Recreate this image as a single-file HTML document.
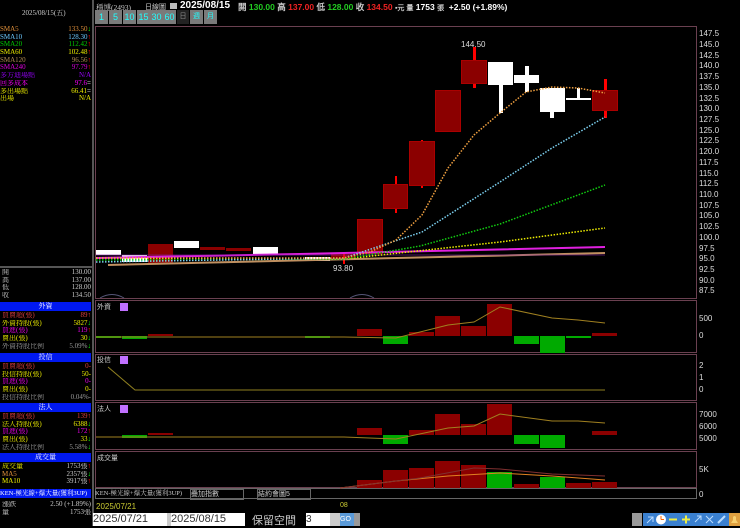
<!DOCTYPE html><html><head><meta charset="utf-8"><style>
body{margin:0;width:740px;height:526px;background:#000;overflow:hidden;font-family:"Liberation Sans","WenQuanYi Zen Hei",sans-serif;position:relative;color:#ccc}
.a{position:absolute;white-space:nowrap}
.l{font-family:"Liberation Serif","Noto Serif CJK SC",serif;font-size:7px;line-height:7.7px}
.l div{position:relative;height:7.7px;overflow:hidden}
.r{position:absolute;right:0;top:0}
.hd{position:absolute;left:0;width:91px;height:9px;background:#0018f0;color:#fff;font-size:7px;line-height:9px;text-align:center;font-family:"Liberation Serif","Noto Serif CJK SC",serif;overflow:hidden}
.btn{position:absolute;top:10px;height:14px;background:#7a7a7a;color:#2ff;font-size:9px;line-height:14px;text-align:center}
.ax{position:absolute;left:699px;font-size:8px;color:#ddd;font-family:"Liberation Sans",sans-serif}
</style></head><body>
<div class="a" style="left:92px;top:0;width:2px;height:526px;background:#555"></div>
<div class="a" style="left:22px;top:8px;color:#ccc;font-size:7px;font-family:'Liberation Serif','Noto Serif CJK SC',serif">2025/08/15(五)</div>
<div class="a l" style="left:0;top:26px;width:91px">
<div style="color:#e0903a">SMA5<span class="r">133.50<b style="color:#0f0">↓</b></span></div>
<div style="color:#6ac8ff">SMA10<span class="r">128.30<b style="color:#f00">↑</b></span></div>
<div style="color:#0c0">SMA20<span class="r">112.42<b style="color:#f00">↑</b></span></div>
<div style="color:#ee0">SMA60<span class="r">102.48<b style="color:#f00">↑</b></span></div>
<div style="color:#b08a50">SMA120<span class="r">96.56<b style="color:#f00">↑</b></span></div>
<div style="color:#d0d">SMA240<span class="r">97.79<b style="color:#f00">↑</b></span></div>
<div style="color:#90f">多方迪場點<span class="r">N/A</span></div>
<div style="color:#f0f">回多成本<span class="r">97.6<b style="color:#ccc">=</b></span></div>
<div style="color:#ee0">多出場點<span class="r">66.41<b style="color:#ccc">=</b></span></div>
<div style="color:#ee0">出場<span class="r">N/A</span></div></div>
<div class="a" style="left:0;top:266px;width:92px;height:2px;background:#555"></div>
<div class="a l" style="left:2px;top:269px;width:89px;color:#ccc">
<div>開<span class="r">130.00</span></div><div>高<span class="r">137.00</span></div><div>低<span class="r">128.00</span></div><div>收<span class="r">134.50</span></div></div>
<div class="hd" style="top:302px">外資</div>
<div class="a l" style="left:2px;top:312px;width:89px">
<div style="color:#e04040">買賣超(張)<span class="r">89<b>↑</b></span></div>
<div style="color:#ee0">外資持股(張)<span class="r">5827<b style="color:#0f0">↓</b></span></div>
<div style="color:#e0e">買進(張)<span class="r">119<b style="color:#f00">↑</b></span></div>
<div style="color:#ee0">賣出(張)<span class="r">30<b style="color:#0f0">↓</b></span></div>
<div style="color:#999">外資持股比例<span class="r">5.09%<b style="color:#0f0">↓</b></span></div></div>
<div class="hd" style="top:353px">投信</div>
<div class="a l" style="left:2px;top:363px;width:89px">
<div style="color:#e04040">買賣超(張)<span class="r">0-</span></div>
<div style="color:#ee0">投信持股(張)<span class="r">50-</span></div>
<div style="color:#e0e">買進(張)<span class="r">0-</span></div>
<div style="color:#ee0">賣出(張)<span class="r">0-</span></div>
<div style="color:#999">投信持股比例<span class="r">0.04%-</span></div></div>
<div class="hd" style="top:403px">法人</div>
<div class="a l" style="left:2px;top:413px;width:89px">
<div style="color:#e04040">買賣超(張)<span class="r">139<b>↑</b></span></div>
<div style="color:#ee0">法人持股(張)<span class="r">6388<b style="color:#0f0">↓</b></span></div>
<div style="color:#e0e">買進(張)<span class="r">172<b style="color:#f00">↑</b></span></div>
<div style="color:#ee0">賣出(張)<span class="r">33<b style="color:#0f0">↓</b></span></div>
<div style="color:#999">法人持股比例<span class="r">5.58%<b style="color:#0f0">↓</b></span></div></div>
<div class="hd" style="top:453px">成交量</div>
<div class="a l" style="left:2px;top:463px;width:89px">
<div style="color:#ee0">成交量<span class="r" style="color:#ccc">1753張<b style="color:#f00">↑</b></span></div>
<div style="color:#e0903a">MA5<span class="r" style="color:#ccc">2357張<b style="color:#0f0">↓</b></span></div>
<div style="color:#ee0">MA10<span class="r" style="color:#ccc">3917張<b style="color:#f00">↑</b></span></div></div>
<div class="hd" style="top:489px;text-align:left;font-size:6.5px">KEN-極光線+爆大量(獲利3UP)</div>
<div class="a l" style="left:2px;top:501px;width:89px">
<div>漲跌<span class="r">2.50 (+1.89%)</span></div><div>量<span class="r">1753張</span></div></div>
<!-- top bar -->
<div class="a" style="left:96px;top:2px;font-size:7.5px;color:#ccc;font-family:'Liberation Serif','Noto Serif CJK SC',serif">穩博(2493)</div>
<div class="a" style="left:145px;top:2px;font-size:7px;color:#ccc">日線圖</div>
<div class="a" style="left:170px;top:3px;width:7px;height:6px;background:#bbb"></div>
<div class="a" style="left:180px;top:0;font-size:10px;font-weight:bold;color:#fff">2025/08/15</div>
<div class="a" style="left:238px;top:1px;font-size:8.5px;font-weight:bold">閞 <span style="color:#2c2">130.00</span> 高 <span style="color:#e22">137.00</span> 低 <span style="color:#2c2">128.00</span> 收 <span style="color:#e22">134.50</span> <span style="color:#ccc;font-size:7px">▪元 量</span> <span style="color:#fff">1753</span> <span style="font-size:7px">張</span> &nbsp;<span style="color:#fff">+2.50 (+1.89%)</span></div>
<div class="btn" style="left:95px;width:13px">1</div><div class="btn" style="left:109px;width:13px">5</div><div class="btn" style="left:123px;width:13px">10</div><div class="btn" style="left:137px;width:13px">15</div><div class="btn" style="left:150px;width:13px">30</div><div class="btn" style="left:163px;width:13px">60</div><div class="btn" style="left:177px;width:12px;background:#222;color:#888;font-size:7px">日</div><div class="btn" style="left:190px;width:13px;font-size:7px">週</div><div class="btn" style="left:204px;width:13px;font-size:7px">月</div>
<div class="ax" style="top:29px">147.5</div><div class="ax" style="top:40px">145.0</div><div class="ax" style="top:51px">142.5</div><div class="ax" style="top:61px">140.0</div><div class="ax" style="top:72px">137.5</div><div class="ax" style="top:83px">135.0</div><div class="ax" style="top:94px">132.5</div><div class="ax" style="top:104px">130.0</div><div class="ax" style="top:115px">127.5</div><div class="ax" style="top:126px">125.0</div><div class="ax" style="top:136px">122.5</div><div class="ax" style="top:147px">120.0</div><div class="ax" style="top:158px">117.5</div><div class="ax" style="top:169px">115.0</div><div class="ax" style="top:179px">112.5</div><div class="ax" style="top:190px">110.0</div><div class="ax" style="top:201px">107.5</div><div class="ax" style="top:211px">105.0</div><div class="ax" style="top:222px">102.5</div><div class="ax" style="top:233px">100.0</div><div class="ax" style="top:244px">97.5</div><div class="ax" style="top:254px">95.0</div><div class="ax" style="top:265px">92.5</div><div class="ax" style="top:276px">90.0</div><div class="ax" style="top:286px">87.5</div>
<div class="ax" style="top:314px">500</div><div class="ax" style="top:331px">0</div>
<div class="ax" style="top:361px">2</div><div class="ax" style="top:373px">1</div><div class="ax" style="top:385px">0</div>
<div class="ax" style="top:410px">7000</div><div class="ax" style="top:422px">6000</div><div class="ax" style="top:434px">5000</div>
<div class="ax" style="top:465px">5K</div><div class="ax" style="top:490px">0</div>
<svg class="a" style="left:0;top:0" width="740" height="526">
<g fill="none" stroke="#6a4050" stroke-width="1">
<rect x="95.5" y="26.5" width="601" height="272"/>
<rect x="95.5" y="300.5" width="601" height="52"/>
<rect x="95.5" y="354.5" width="601" height="46"/>
<rect x="95.5" y="402.5" width="601" height="47"/>
<rect x="95.5" y="451.5" width="601" height="36"/>
</g>
<g fill="none" stroke="#666"><rect x="95.5" y="488.5" width="601" height="10"/></g>
<g fill="#fff"><rect x="96" y="250" width="25" height="5"/><rect x="122" y="255" width="25" height="7"/><rect x="174" y="241" width="25" height="7"/><rect x="253" y="247" width="25" height="7"/><rect x="305" y="257" width="25" height="4"/></g>
<g fill="#8b0000"><rect x="148" y="244" width="25" height="19"/><rect x="200" y="247" width="25" height="3"/><rect x="226" y="248" width="25" height="3"/><rect x="331" y="254" width="25" height="5"/></g>
<rect x="343" y="252" width="2" height="12" fill="#f00"/>
<g fill="#f00"><rect x="395" y="176" width="2" height="37"/><rect x="421" y="140" width="2" height="48"/><rect x="473" y="47" width="3" height="41"/><rect x="604" y="79" width="3" height="39"/></g>
<g fill="#8b0000" stroke="#a00"><rect x="357.5" y="219.5" width="25" height="34"/><rect x="383.5" y="184.5" width="24" height="24"/><rect x="409.5" y="141.5" width="25" height="44"/><rect x="435.5" y="90.5" width="25" height="41"/><rect x="461.5" y="60.5" width="25" height="23"/><rect x="592.5" y="90.5" width="25" height="20"/></g>
<g fill="#fff"><rect x="488" y="62" width="25" height="23"/><rect x="499" y="85" width="4" height="28"/><rect x="514" y="75" width="25" height="8"/><rect x="525" y="66" width="4" height="26"/><rect x="540" y="88" width="25" height="24"/><rect x="550" y="112" width="4" height="6"/><rect x="566" y="98" width="25" height="2"/><rect x="577" y="88" width="3" height="11"/></g>
<text x="461" y="47" fill="#ddd" font-size="8" font-family="Liberation Sans">144.50</text>
<text x="333" y="271" fill="#ddd" font-size="8" font-family="Liberation Sans">93.80</text>
<path d="M108 265 L605 253" stroke="#c09060" stroke-width="2" fill="none"/>
<path d="M96 258 L300 254 L605 247" stroke="#e020e0" stroke-width="2" fill="none"/>
<path d="M96 255 L605 255" stroke="#8020a0" stroke-width="1" fill="none" opacity=".6"/>
<g fill="none" stroke-width="1.5" stroke-dasharray="1.5 1.5">
<path d="M96 258 L344 259 L500 242 L605 228" stroke="#ee0"/>
<path d="M96 260 L344 259 L420 246 L500 224 L605 185" stroke="#1c1"/>
<path d="M96 262 L344 258 L422 232 L500 182 L552 148 L605 117" stroke="#7cd0f0"/>
<path d="M96 258 L344 258 L370 252 L396 240 L422 215 L448 168 L474 135 L500 113 L526 92 L552 87 L578 88 L605 93" stroke="#f0a040"/>
</g>
<path d="M100 298 Q112 291 124 298 M350 298 Q362 291 374 298" stroke="#557" fill="none"/>
<g fill="#8b0000"><rect x="148" y="334" width="25" height="2"/><rect x="357" y="329" width="25" height="7"/><rect x="409" y="332" width="25" height="4"/><rect x="435" y="316" width="25" height="20"/><rect x="461" y="326" width="25" height="10"/><rect x="487" y="304" width="25" height="32"/><rect x="592" y="333" width="25" height="3"/></g>
<g fill="#0a0"><rect x="122" y="336" width="25" height="3"/><rect x="383" y="336" width="25" height="8"/><rect x="514" y="336" width="25" height="8"/><rect x="540" y="336" width="25" height="17"/><rect x="566" y="336" width="25" height="2"/><rect x="96" y="336" width="25" height="2"/><rect x="305" y="336" width="25" height="2"/></g>
<path d="M96 337 L344 337 L396 338 L448 325 L474 322 L500 307 L552 318 L578 320 L605 323" stroke="#a08020" fill="none"/>
<text x="97" y="309" fill="#ccc" font-size="7">外資</text><rect x="120" y="303" width="8" height="8" fill="#c070ff"/>
<text x="97" y="362" fill="#ccc" font-size="7">投信</text><rect x="120" y="356" width="8" height="8" fill="#c070ff"/>
<path d="M108 367 L135 390 L605 390" stroke="#908020" fill="none"/>
<text x="97" y="411" fill="#ccc" font-size="7">法人</text><rect x="120" y="405" width="8" height="8" fill="#c070ff"/>
<g fill="#8b0000"><rect x="148" y="433" width="25" height="2"/><rect x="357" y="428" width="25" height="7"/><rect x="409" y="430" width="25" height="5"/><rect x="435" y="414" width="25" height="21"/><rect x="461" y="424" width="25" height="11"/><rect x="487" y="404" width="25" height="31"/><rect x="592" y="431" width="25" height="4"/></g>
<g fill="#0a0"><rect x="122" y="435" width="25" height="3"/><rect x="383" y="435" width="25" height="9"/><rect x="514" y="435" width="25" height="9"/><rect x="540" y="435" width="25" height="13"/></g>
<path d="M96 437 L344 437 L396 439 L448 428 L474 426 L500 414 L552 421 L578 421 L605 423" stroke="#a08020" fill="none"/>
<text x="97" y="460" fill="#ccc" font-size="7">成交量</text>
<g fill="#8b0000"><rect x="357" y="480" width="25" height="8"/><rect x="383" y="470" width="25" height="18"/><rect x="409" y="468" width="25" height="20"/><rect x="435" y="461" width="25" height="27"/><rect x="461" y="465" width="25" height="23"/><rect x="514" y="484" width="25" height="4"/><rect x="566" y="483" width="25" height="5"/><rect x="592" y="482" width="25" height="6"/></g>
<g fill="#0a0"><rect x="487" y="472" width="25" height="16"/><rect x="540" y="477" width="25" height="11"/></g>
<path d="M340 488 L396 481 L448 476 L500 473 L552 476 L605 480" stroke="#e08020" fill="none"/>
<path d="M340 488 L420 478 L474 468 L500 469 L552 474 L605 476" stroke="#803030" fill="none"/>
</svg>
<div class="a" style="left:95px;top:489px;width:92px;height:10px;color:#ccc;font-size:6.5px;line-height:10px;font-family:'Liberation Serif','Noto Serif CJK SC',serif;overflow:hidden">KEN-極光線+爆大量(獲利3UP)</div>
<div class="a" style="left:190px;top:489px;width:52px;height:9px;border:1px solid #666;color:#ccc;font-size:7px;line-height:9px">疊加指數</div>
<div class="a" style="left:257px;top:489px;width:52px;height:9px;border:1px solid #666;color:#ccc;font-size:7px;line-height:9px">結約會圖5</div>
<div class="a" style="left:96px;top:502px;color:#cc3;font-size:8px">2025/07/21</div>
<div class="a" style="left:340px;top:502px;color:#cc3;font-size:7px">08</div>
<div class="a" style="left:93px;top:513px;width:74px;height:13px;background:#fff;color:#333;font-size:11px;line-height:13px">2025/07/21</div>
<div class="a" style="left:167px;top:513px;width:5px;height:13px;background:#ccc"></div>
<div class="a" style="left:171px;top:513px;width:74px;height:13px;background:#fff;color:#333;font-size:11px;line-height:13px">2025/08/15</div>
<div class="a" style="left:252px;top:512px;color:#ccc;font-size:11px">保留空間</div>
<div class="a" style="left:306px;top:513px;width:24px;height:13px;background:#fff;color:#333;font-size:10px;line-height:13px">3</div>
<div class="a" style="left:330px;top:513px;width:10px;height:13px;background:#ccc"></div>
<div class="a" style="left:340px;top:513px;width:14px;height:13px;background:#5a9ad8;color:#fff;font-size:7px;line-height:13px">GO</div>
<div class="a" style="left:354px;top:513px;width:6px;height:13px;background:#999"></div>
<div class="a" style="left:632px;top:513px;width:10px;height:13px;background:#999"></div>
<svg class="a" style="left:643px;top:513px" width="97" height="13">
<rect x="0" width="97" height="13" fill="#3a80d0"/>
<path d="M4 10 L10 4 M5 4 H10 V9" stroke="#bdf" fill="none"/>
<circle cx="18" cy="6.5" r="5" fill="#fff"/><path d="M18 6.5 V3 M18 6.5 H21" stroke="#f60"/>
<rect x="26" y="5.5" width="8" height="2" fill="#ee4"/>
<path d="M39 6.5 H47 M43 2.5 V10.5" stroke="#ee4" stroke-width="2"/>
<path d="M52 9 L58 3 M54 3 H58 V7" stroke="#bdf" fill="none"/>
<path d="M63 3 L70 10 M70 3 L63 10" stroke="#bdf"/>
<path d="M75 10 L82 3" stroke="#bdf" stroke-width="2"/>
<rect x="86" y="0" width="11" height="13" fill="#e0a040"/><path d="M88 10 H95 L93 7 V4 Q91.5 2 90 4 V7 Z" fill="#f8d070"/>
</svg>
</body></html>
